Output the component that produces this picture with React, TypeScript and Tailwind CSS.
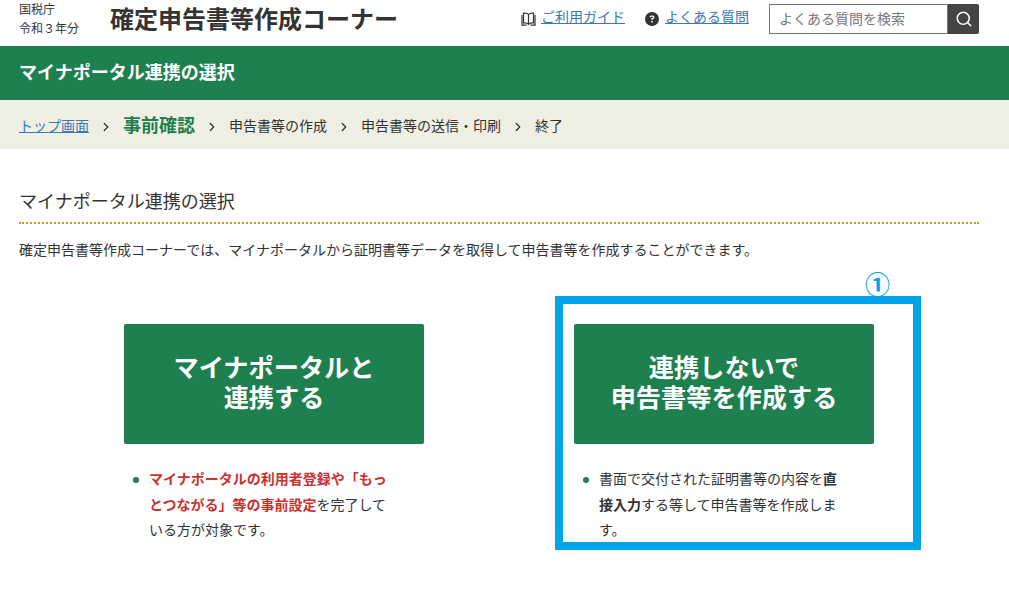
import React from 'react';
import { ChevronRight, Search } from 'lucide-react';
import { FaCircleQuestion } from 'react-icons/fa6';

const BookIcon = () => (
  <svg width="15" height="14" viewBox="0 0 15 14" fill="none" stroke="#333" strokeWidth="1.2" className="shrink-0">
    <path d="M7.5 2.5C6.5 1.2 4.5 1 2.5 1.2V11c2 -.2 4 0 5 1.3C8.5 11 10.5 10.8 12.5 11V1.2C10.5 1 8.5 1.2 7.5 2.5Z" />
    <path d="M7.5 2.5v9.8M1 3v10.2h4.5M14 3v10.2h-4.5" />
  </svg>
);

const Crumb = () => <ChevronRight size={14} strokeWidth={2.2} className="mx-[10px] text-[#333] shrink-0" />;

const App: React.FC = () => {
  return (
    <div className="w-[1009px] h-[595px] overflow-hidden bg-white text-[#333] text-[14px] font-['Liberation_Sans','Noto_Sans_CJK_JP',sans-serif]">
      {/* Header */}
      <header className="h-[46px] flex items-center pl-[19px] pr-[30px]">
        <div className="w-[91px] text-[12px] leading-[19px] -mt-[6px]">
          <p>国税庁</p>
          <p>令和３年分</p>
        </div>
        <h1 className="text-[24px] font-bold leading-none -mt-[6px]">確定申告書等作成コーナー</h1>
        <div className="ml-auto flex items-center -mt-[8px]">
          <BookIcon />
          <a href="#" className="ml-[5px] underline text-[#3b78b4] leading-[20px] -mt-[4px]">ご利用ガイド</a>
          <FaCircleQuestion size={14} className="ml-[20px] text-[#333]" />
          <a href="#" className="ml-[6px] underline text-[#3b78b4] leading-[20px] -mt-[4px]">よくある質問</a>
          <div className="ml-[20px] flex h-[30px] w-[210px]">
            <div className="w-[179px] border border-[#777] pl-[9px] flex items-center text-[#777]">よくある質問を検索</div>
            <button className="w-[31px] bg-[#444] rounded-r-[2px] flex items-center justify-center text-white">
              <Search size={18} strokeWidth={2} />
            </button>
          </div>
        </div>
      </header>

      {/* Page title */}
      <div className="h-[54px] bg-[#1e7f4f] flex items-center px-[19px] text-white text-[18px] font-bold">
        マイナポータル連携の選択
      </div>

      {/* Steps */}
      <nav className="h-[49px] bg-[#f0efe4] flex items-center px-[19px] pt-[4px]">
        <a href="#" className="underline text-[#3b78b4]">トップ画面</a>
        <Crumb />
        <span className="text-[18px] font-bold text-[#1e7f4f]">事前確認</span>
        <Crumb />
        <span>申告書等の作成</span>
        <Crumb />
        <span>申告書等の送信・印刷</span>
        <Crumb />
        <span>終了</span>
      </nav>

      {/* Main */}
      <main className="px-[19px] pr-[30px] pt-[40px]">
        <h2 className="text-[18px] leading-[27px] pb-[6px] border-b-2 border-dotted border-[#c99a2a]">
          マイナポータル連携の選択
        </h2>
        <p className="mt-[16px] leading-[21px]">
          確定申告書等作成コーナーでは、マイナポータルから証明書等データを取得して申告書等を作成することができます。
        </p>

        <div className="mt-[63px] flex justify-center gap-[150px]">
          <div className="w-[300px]">
            <button className="w-full h-[120px] pb-[2px] bg-[#1e7f4f] rounded-[2px] text-white text-[25.2px] font-bold leading-[30px]">
              マイナポータルと<br />連携する
            </button>
            <div className="relative mt-[23px] pl-[25px] leading-[25.5px]">
              <span className="absolute left-[9px] top-[10px] w-[6px] h-[6px] rounded-full bg-[#1e7f4f]" />
              <span className="font-bold text-[#c8322f]">マイナポータルの利用者登録や「もっ</span><br />
              <span className="font-bold text-[#c8322f]">とつながる」等の事前設定</span>を完了して<br />
              いる方が対象です。
            </div>
          </div>

          <div className="relative w-[300px]">
            <button className="w-full h-[120px] pb-[2px] bg-[#1e7f4f] rounded-[2px] text-white text-[25.2px] font-bold leading-[30px]">
              連携しないで<br />申告書等を作成する
            </button>
            <div className="relative mt-[23px] pl-[25px] leading-[25.5px]">
              <span className="absolute left-[9px] top-[10px] w-[6px] h-[6px] rounded-full bg-[#1e7f4f]" />
              書面で交付された証明書等の内容を<b>直</b><br />
              <b>接入力</b>する等して申告書等を作成しま<br />
              す。
            </div>
            {/* annotation frame */}
            <div className="absolute left-[-19px] top-[-28px] w-[366px] h-[254px] border-[8px] border-[#00a5e8] pointer-events-none" />
            <span className="absolute left-[291px] top-[-54px] text-[25px] leading-[30px] font-bold text-[#00a5e8]">①</span>
          </div>
        </div>
      </main>
    </div>
  );
};

export default App;
